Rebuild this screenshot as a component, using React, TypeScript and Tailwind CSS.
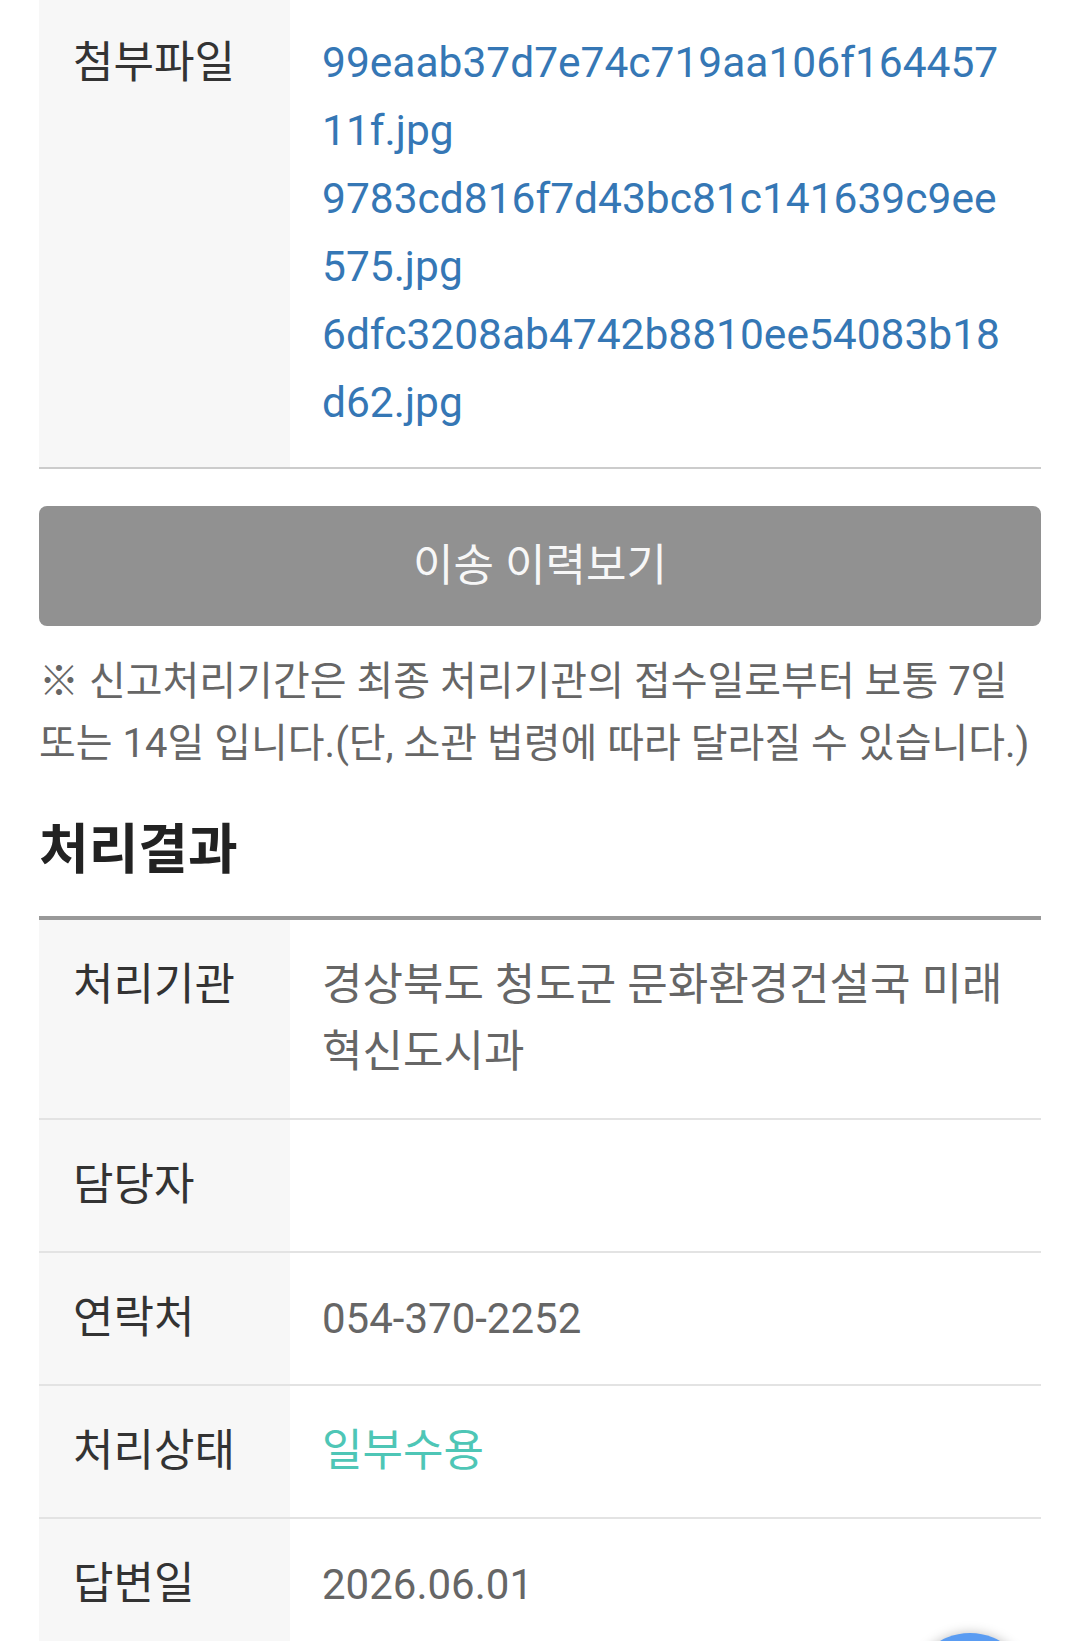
import React from "react";

/**
 * Report result detail (mobile view, scrolled)
 */

const files = [
    "99eaab37d7e74c719aa106f16445711f.jpg",
    "9783cd816f7d43bc81c141639c9ee575.jpg",
    "6dfc3208ab4742b8810ee54083b18d62.jpg",
];

interface RowProps {
    label: string
    valueClass?: string
    children?: React.ReactNode
}

const ResultRow: React.FC<RowProps> = ({label, valueClass = "text-[44px] text-[#666]", children}) => {
    return (
        <div className="grid grid-cols-[251px_1fr] border-b-2 border-[#e3e3e3]">
            <div className="bg-[#f7f7f7] pl-[34px] py-[32px] text-[44px] leading-[67px] text-[#333]">
                {label}
            </div>
            <div className={`pl-[32px] pr-[35px] py-[32px] leading-[67px] ${valueClass}`}>
                {children}
            </div>
        </div>
    );
};

export default function App() {
    return (
        <div
            className="relative h-[1641px] overflow-hidden bg-white"
            style={{fontFamily: 'Roboto, "Noto Sans CJK KR", sans-serif'}}
        >
            <div className="px-[39px]">

                {/* Attachments */}
                <div className="grid grid-cols-[251px_1fr] border-b-2 border-[#cccccc]">
                    <div className="bg-[#f7f7f7] pl-[34px] pt-[29px] pb-[30px] text-[44px] leading-[68px] text-[#333]">
                        첨부파일
                    </div>
                    <div className="pl-[32px] pr-[35px] pt-[29px] pb-[30px] text-[42.5px] leading-[68px] break-all">
                        {files.map((f) => (
                            <a key={f} href="#" className="block text-[#3577b5]">{f}</a>
                        ))}
                    </div>
                </div>

                {/* Transfer history */}
                <button
                    type="button"
                    className="mt-[37px] flex h-[120px] w-full items-center justify-center rounded-[8px] bg-[#919191] text-[44px] text-[#f7f7f7]"
                >
                    이송 이력보기
                </button>

                <p className="mt-[25px] -mr-[20px] break-keep text-[40px] leading-[62px] text-[#666]">
                    ※ 신고처리기간은 최종 처리기관의 접수일로부터 보통 7일 또는 14일 입니다.(단, 소관 법령에 따라 달라질 수 있습니다.)
                </p>

                <h2 className="mt-[46px] text-[54px] font-bold leading-[60px] text-[#222]">처리결과</h2>

                {/* Result table */}
                <div className="mt-[35px] border-t-4 border-[#999]">
                    <ResultRow label="처리기관">
                        경상북도 청도군 문화환경건설국 미래혁신도시과
                    </ResultRow>
                    <ResultRow label="담당자" />
                    <ResultRow label="연락처" valueClass="text-[42px] text-[#666]">
                        054-370-2252
                    </ResultRow>
                    <ResultRow label="처리상태" valueClass="text-[44px] text-[#4ec6b6]">
                        일부수용
                    </ResultRow>
                    <ResultRow label="답변일" valueClass="text-[42px] text-[#666]">
                        2026.06.01
                    </ResultRow>
                </div>
            </div>

            {/* Scroll-to-top button */}
            <div className="absolute left-[910px] top-[1633px] h-[120px] w-[120px] rounded-full bg-[#5a9cf2] shadow-[0_0_12px_rgba(0,0,0,0.25)]" />
        </div>
    );
}
